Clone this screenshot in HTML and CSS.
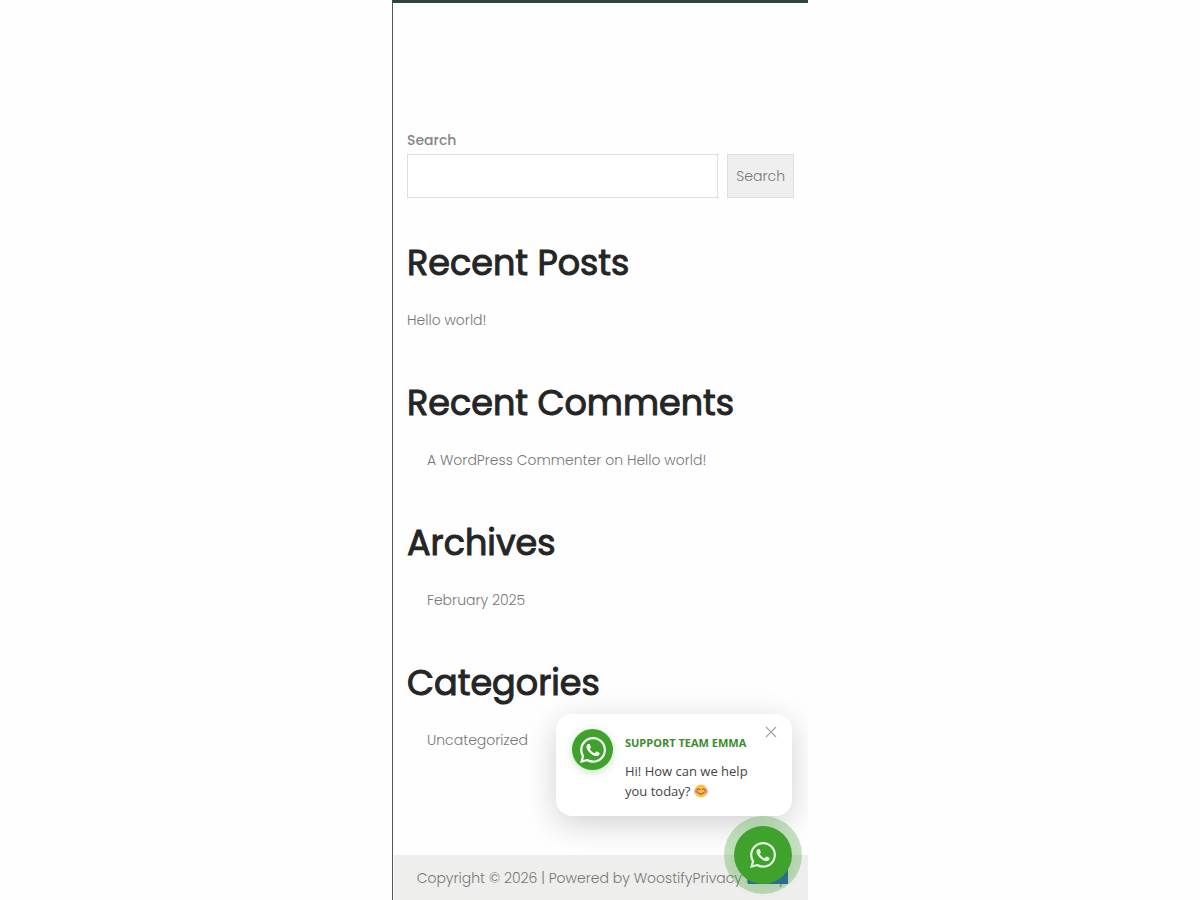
FILE: index.html
```
<!DOCTYPE html>
<html lang="en">
<head>
    <meta charset="UTF-8">
    <meta name="viewport" content="width=device-width, initial-scale=1.0">
    <title>Hello world!</title>
    <link rel="stylesheet" href="styles.css">
</head>
<body>
    <div class="page">
        <!-- Sidebar widgets -->
        <main class="sidebar">
            <form class="search-form" role="search">
                <label for="search-field">Search</label>
                <div class="search-row">
                    <input type="search" id="search-field" name="s">
                    <button type="submit">Search</button>
                </div>
            </form>

            <section class="widget">
                <h2>Recent Posts</h2>
                <ul class="flush">
                    <li><a href="#">Hello world!</a></li>
                </ul>
            </section>

            <section class="widget">
                <h2>Recent Comments</h2>
                <ul>
                    <li><a href="#">A WordPress Commenter</a> on <a href="#">Hello world!</a></li>
                </ul>
            </section>

            <section class="widget">
                <h2>Archives</h2>
                <ul>
                    <li><a href="#">February 2025</a></li>
                </ul>
            </section>

            <section class="widget">
                <h2>Categories</h2>
                <ul>
                    <li><a href="#">Uncategorized</a></li>
                </ul>
            </section>
        </main>

        <!-- Footer -->
        <footer class="site-footer">
            <span>Copyright © 2026 | Powered by <a href="#">Woostify</a></span><a href="#">Privacy Policy</a>
        </footer>

        <a href="#" class="scroll-top" aria-label="Scroll to top"></a>

        <!-- Chat popup -->
        <div class="chat-popup">
            <span class="chat-avatar">
                <svg viewBox="0 0 24 24" width="26" height="26" aria-hidden="true"><use href="#whatsapp"/></svg>
            </span>
            <div class="chat-text">
                <strong>SUPPORT TEAM EMMA</strong>
                <p>Hi! How can we help you today?
                    <svg class="smile" viewBox="0 0 28 28" width="14" height="14" aria-hidden="true">
                        <circle cx="14" cy="14" r="13" fill="#fcc04a"/>
                        <circle cx="5" cy="15" r="4" fill="#f77b83"/>
                        <circle cx="23" cy="15" r="4" fill="#f77b83"/>
                        <path d="M6 11q3-4 6 0M16 11q3-4 6 0M8 17q6 7 12 0" fill="none" stroke="#754821" stroke-width="2" stroke-linecap="round"/>
                    </svg>
                </p>
            </div>
            <button type="button" class="chat-close" aria-label="Close">
                <svg viewBox="0 0 12 12" width="12" height="12" aria-hidden="true"><path d="M1 1l10 10M11 1L1 11" stroke="#a5a5a5" stroke-width="1.200"/></svg>
            </button>
        </div>

        <button type="button" class="chat-button" aria-label="Open WhatsApp chat">
            <svg viewBox="0 0 24 24" width="26" height="26" aria-hidden="true"><use href="#whatsapp"/></svg>
        </button>
    </div>

    <svg class="icon-defs" width="0" height="0" aria-hidden="true">
        <symbol id="whatsapp" viewBox="0 0 24 24">
            <path fill="currentColor" d="M17.472 14.382c-.297-.149-1.758-.867-2.030-.967-.273-.099-.471-.148-.670.150-.197.297-.767.966-.940 1.164-.173.199-.347.223-.644.075-.297-.150-1.255-.463-2.390-1.475-.883-.788-1.480-1.761-1.653-2.059-.173-.297-.018-.458.130-.606.134-.133.298-.347.446-.520.149-.174.198-.298.298-.497.099-.198.050-.371-.025-.520-.075-.149-.669-1.612-.916-2.207-.242-.579-.487-.500-.669-.510-.173-.008-.371-.010-.570-.010-.198 0-.520.074-.792.372-.272.297-1.040 1.016-1.040 2.479 0 1.462 1.065 2.875 1.213 3.074.149.198 2.096 3.200 5.077 4.487.709.306 1.262.489 1.694.625.712.227 1.360.195 1.871.118.571-.085 1.758-.719 2.006-1.413.248-.694.248-1.289.173-1.413-.074-.124-.272-.198-.570-.347m-5.421 7.403h-.004a9.870 9.870 0 01-5.031-1.378l-.361-.214-3.741.982.998-3.648-.235-.374a9.860 9.860 0 01-1.510-5.260c.001-5.450 4.436-9.884 9.888-9.884 2.640 0 5.122 1.030 6.988 2.898a9.825 9.825 0 012.893 6.994c-.003 5.450-4.437 9.884-9.885 9.884m8.413-18.297A11.815 11.815 0 0012.050 0C5.495 0 .160 5.335.157 11.892c0 2.096.547 4.142 1.588 5.945L.057 24l6.305-1.654a11.882 11.882 0 005.683 1.448h.005c6.554 0 11.890-5.335 11.893-11.893a11.821 11.821 0 00-3.480-8.413z"/>
        </symbol>
    </svg>
</body>
</html>
```
FILE: styles.css
```
/* Reset */
* {
    box-sizing: border-box;
    margin: 0;
    padding: 0;
}
body {
    font-family: Poppins, Inter, sans-serif;
    font-size: 14px;
    font-weight: 300;
    line-height: 28px;
    color: #777;
    background-color: #fefefe;
}
a {
    color: inherit;
    text-decoration: none;
}
.page {
    position: relative;
    display: flex;
    flex-direction: column;
    max-width: 416px;
    min-height: 100vh;
    margin: 0 auto;
    border-top: 3px solid #2d453d;
    border-left: 1px solid #555;
    overflow: hidden;
}

/* Sidebar */
.sidebar {
    padding: 123px 14px 40px;
}
.search-form {
    margin-bottom: 40px;
}
.search-form label {
    display: block;
    font-weight: 500;
    color: #858585;
}
.search-row {
    display: flex;
    gap: 9px;
}
.search-row input {
    flex: 1;
    min-width: 0;
    height: 44px;
    padding: 0 12px;
    border: 1px solid #dedede;
    background-color: #fff;
    font: inherit;
}
.search-row button {
    padding: 0 8px;
    border: 1px solid #dedede;
    background-color: #efefef;
    color: #777;
    font: inherit;
}
.widget {
    margin-bottom: 44px;
}
.widget h2 {
    font-size: 35px;
    font-weight: 400;
    line-height: 50px;
    color: #252525;
    -webkit-text-stroke: 1px #252525;
    margin-bottom: 18px;
}
.widget ul {
    list-style: none;
    padding-left: 20px;
}
.widget ul.flush {
    padding-left: 0;
}

/* Footer */
.site-footer {
    display: flex;
    justify-content: center;
    margin-top: auto;
    margin-left: 1px;
    padding: 9px 12px 8px;
    background-color: #eeeeec;
    white-space: nowrap;
}
.scroll-top {
    position: absolute;
    right: 20px;
    bottom: 16px;
    width: 40px;
    height: 40px;
    background-color: #2559bd;
}

/* Chat popup */
.chat-popup {
    position: absolute;
    right: 16px;
    bottom: 84px;
    display: flex;
    gap: 12px;
    width: 236px;
    padding: 15px 40px 15px 16px;
    border-radius: 16px;
    background-color: #fff;
    box-shadow: 0 8px 32px rgba(0, 0, 0, 0.18);
    font-family: "Open Sans", sans-serif;
    font-weight: 400;
}
.chat-avatar {
    display: flex;
    flex: none;
    align-items: center;
    justify-content: center;
    width: 41px;
    height: 41px;
    border-radius: 50%;
    background-color: #3fa22d;
    color: #fff;
    box-shadow: 0 2px 8px rgba(63, 162, 45, 0.3);
}
.chat-text strong {
    display: block;
    font-size: 11px;
    line-height: 28px;
    white-space: nowrap;
    color: #388c2d;
}
.chat-text p {
    margin-top: 4px;
    font-size: 13px;
    line-height: 20px;
    color: #444;
}
.smile {
    vertical-align: -2px;
}
.chat-close {
    position: absolute;
    top: 12px;
    right: 15px;
    display: flex;
    border: none;
    background: none;
}

/* Round button with its pulse ring */
.chat-button {
    position: absolute;
    right: 16px;
    bottom: 16px;
    display: flex;
    align-items: center;
    justify-content: center;
    width: 58px;
    height: 58px;
    border: none;
    border-radius: 50%;
    background-color: #3fa22d;
    color: #e3f3df;
    box-shadow: 0 0 0 10px rgba(63, 162, 45, 0.3), 0 4px 16px rgba(0, 0, 0, 0.06);
}
.icon-defs {
    position: absolute;
}
```
